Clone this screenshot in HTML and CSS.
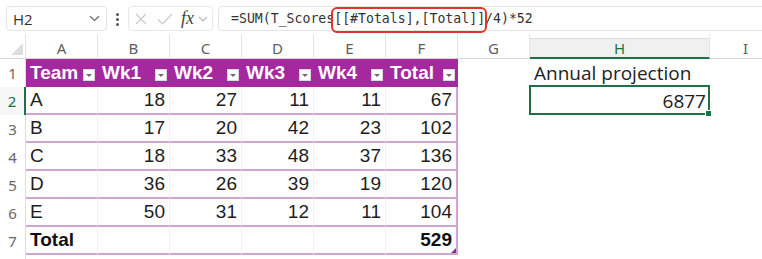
FILE: index.html
```html
<!DOCTYPE html>
<html>
<head>
<meta charset="utf-8">
<link rel="stylesheet" href="styles.css">
</head>
<body>
<div class="toolbar">
  <div class="namebox">
    <span>H2</span>
    <svg width="11" height="7" viewBox="0 0 11 7"><path d="M1 1.2l4.5 4.3L10 1.2" stroke="#6b6b6b" fill="none" stroke-width="1.2"/></svg>
  </div>
  <div class="kebab"><i></i><i></i><i></i></div>
  <div class="fbtns">
    <svg class="ic-x" width="12" height="12" viewBox="0 0 12 12"><path d="M1 1L11 11M11 1L1 11" stroke="#c9c9c9" stroke-width="1.1"/></svg>
    <svg class="ic-ok" width="16" height="12" viewBox="0 0 16 12"><path d="M1 6.5l4.5 4.5L15 1" stroke="#c9c9c9" fill="none" stroke-width="1.1"/></svg>
    <span class="fx">fx</span>
    <svg class="ic-dd" width="10" height="6" viewBox="0 0 10 6"><path d="M1 1l4 4l4-4" stroke="#b5b5b5" fill="none" stroke-width="1.1"/></svg>
  </div>
  <div class="formula"><span>=SUM(T_Scores</span><span class="hl">[[#Totals],[Total]]</span><span>/4)*52</span></div>
</div>

<div class="sheet">
  <div class="corner"><svg width="12" height="12" viewBox="0 0 12 12"><path d="M12 0V12H0Z" fill="#dedede"/></svg></div>
  <div class="ch">A</div><div class="ch">B</div><div class="ch">C</div><div class="ch">D</div><div class="ch">E</div><div class="ch">F</div><div class="ch">G</div><div class="ch sel">H</div><div class="ch">I</div>

  <div class="rh">1</div>
  <div class="th">Team<span class="flt"></span></div>
  <div class="th">Wk1<span class="flt"></span></div>
  <div class="th">Wk2<span class="flt"></span></div>
  <div class="th">Wk3<span class="flt"></span></div>
  <div class="th">Wk4<span class="flt"></span></div>
  <div class="th">Total<span class="flt"></span></div>
  <div class="c"></div>
  <div class="c label">Annual projection</div>
  <div class="c"></div>

  <div class="rh sel">2</div>
  <div class="td">A</div><div class="td num">18</div><div class="td num">27</div><div class="td num">11</div><div class="td num">11</div><div class="td num f">67</div>
  <div class="c"></div><div class="c val active">6877</div><div class="c"></div>

  <div class="rh">3</div>
  <div class="td">B</div><div class="td num">17</div><div class="td num">20</div><div class="td num">42</div><div class="td num">23</div><div class="td num f">102</div>
  <div class="c"></div><div class="c"></div><div class="c"></div>

  <div class="rh">4</div>
  <div class="td">C</div><div class="td num">18</div><div class="td num">33</div><div class="td num">48</div><div class="td num">37</div><div class="td num f">136</div>
  <div class="c"></div><div class="c"></div><div class="c"></div>

  <div class="rh">5</div>
  <div class="td">D</div><div class="td num">36</div><div class="td num">26</div><div class="td num">39</div><div class="td num">19</div><div class="td num f">120</div>
  <div class="c"></div><div class="c"></div><div class="c"></div>

  <div class="rh">6</div>
  <div class="td">E</div><div class="td num">50</div><div class="td num">31</div><div class="td num">12</div><div class="td num">11</div><div class="td num f">104</div>
  <div class="c"></div><div class="c"></div><div class="c"></div>

  <div class="rh">7</div>
  <div class="td tt">Total</div><div class="td"></div><div class="td"></div><div class="td"></div><div class="td"></div><div class="td num f tt end">529</div>
  <div class="c"></div><div class="c"></div><div class="c"></div>

  <div class="rh"></div>
  <div class="c"></div><div class="c"></div><div class="c"></div><div class="c"></div><div class="c"></div><div class="c"></div>
  <div class="c"></div><div class="c"></div><div class="c"></div>
</div>
</body>
</html>
```

FILE: styles.css
```css
* { box-sizing: border-box; }

body {
  margin: 0;
  width: 762px;
  height: 259px;
  overflow: hidden;
  background: #fff;
  font-family: "Liberation Sans", Arial, sans-serif;
}

/* ---------- formula bar ---------- */
.toolbar {
  height: 34px;
  display: flex;
  align-items: flex-start;
  padding: 6px 0 0 6px;
  white-space: nowrap;
  overflow: hidden;
}

.namebox {
  width: 101px;
  height: 25px;
  flex: none;
  border: 1px solid #e4e4e4;
  border-radius: 4px;
  display: flex;
  align-items: center;
  justify-content: space-between;
  padding: 0 6px;
  font-family: "Open Sans", sans-serif;
  font-size: 15px;
  color: #333;
}

.kebab {
  width: 21px;
  flex: none;
  display: flex;
  flex-direction: column;
  align-items: center;
  gap: 2px;
  padding-top: 7px;
}
.kebab i {
  display: block;
  width: 3px;
  height: 3px;
  border-radius: 50%;
  background: #555;
}

.fbtns {
  width: 85px;
  height: 25px;
  flex: none;
  border: 1px solid #e8e8e8;
  border-radius: 4px;
  display: flex;
  align-items: center;
  padding-left: 6px;
}
.ic-ok { margin-left: 10px; }
.fx {
  margin-left: 8px;
  font-family: "Liberation Serif", serif;
  font-style: italic;
  font-size: 18px;
  color: #444;
  line-height: 1;
  margin-top: -2px;
}
.ic-dd { margin-left: 4px; }

.formula {
  flex: 1;
  margin-left: 5px;
  margin-right: -20px;
  height: 25px;
  border: 1px solid #e4e4e4;
  border-radius: 4px;
  padding-left: 12px;
  font-family: "DejaVu Sans Mono", "Liberation Mono", monospace;
  font-size: 13.2px;
  line-height: 23px;
  color: #333;
}
.hl {
  position: relative;
  display: inline-block;
}
.hl::after {
  content: "";
  position: absolute;
  left: -3px;
  right: -2px;
  top: 0;
  bottom: -3px;
  border: 2px solid #e2332c;
  border-radius: 6px;
}

/* ---------- sheet grid ---------- */
.sheet {
  display: grid;
  grid-template-columns: 26px repeat(7, 72px) 180px 72px;
  grid-template-rows: 25px repeat(7, 28px) 4px;
  overflow: hidden;
}

.corner {
  border-bottom: 1px solid #d6d6d6;
  border-right: 1px solid #e2e2e2;
  display: flex;
  align-items: flex-end;
  justify-content: flex-end;
  padding: 0 2px 3px 0;
}

.ch {
  border-bottom: 1px solid #d6d6d6;
  border-right: 1px solid #e6e6e6;
  display: flex;
  align-items: center;
  justify-content: center;
  padding-top: 4px;
  font-family: "Noto Sans", sans-serif;
  font-size: 15px;
  color: #5e5e5e;
}
.ch.sel {
  background: linear-gradient(to bottom, #fff 0 4px, #dcdcdc 4px 5px, #f0f0f0 5px);
  border-bottom: 2px solid #1f7145;
  color: #1f7145;
}

.rh {
  border-right: 1px solid #dedede;
  display: flex;
  align-items: center;
  justify-content: center;
  font-family: "Noto Sans", sans-serif;
  font-size: 15px;
  color: #666;
}
.rh.sel {
  background: #f6f6f6;
  border-right: 2px solid #1f7145;
  color: #1f7145;
}

.th {
  background: #a5289e;
  color: #fff;
  font-weight: bold;
  font-size: 19px;
  line-height: 28px;
  padding-left: 4px;
  display: flex;
  white-space: nowrap;
}
.flt {
  margin-left: auto;
  margin-right: 3px;
  margin-top: 10px;
  width: 12px;
  height: 12px;
  flex: none;
  background: #fff;
  border: 1px solid #d9d9d9;
  display: flex;
  align-items: flex-end;
  justify-content: center;
  padding-bottom: 3px;
}
.flt::after {
  content: "";
  border-left: 3.5px solid transparent;
  border-right: 3.5px solid transparent;
  border-top: 3.5px solid #6a6a6a;
}

.td {
  border-bottom: 2px solid #d2a5cf;
  border-right: 1px solid #f0f0f0;
  font-size: 19px;
  line-height: 26px;
  color: #1e1e1e;
  padding: 0 4px;
  white-space: nowrap;
}
.num { text-align: right; }
.td.f { border-right: 2px solid #d2a5cf; padding-right: 4px; }
.tt { font-weight: bold; color: #111; }
.end { position: relative; }
.end::after {
  content: "";
  position: absolute;
  right: 0;
  bottom: 0;
  border-left: 5px solid transparent;
  border-bottom: 5px solid #8e2e8a;
}

.c {
  white-space: nowrap;
}
.label {
  font-family: "Open Sans", sans-serif;
  font-size: 19px;
  line-height: 28px;
  color: #222;
  padding-left: 4px;
}
.val {
  font-family: "Open Sans", sans-serif;
  font-size: 19px;
  line-height: 28px;
  color: #222;
  text-align: right;
  padding-right: 4px;
}
.active { position: relative; }
.active::after {
  content: "";
  position: absolute;
  left: -1px;
  top: -2px;
  right: 0;
  bottom: 0;
  border: 2px solid #1f7145;
}
.active::before {
  content: "";
  position: absolute;
  right: -2px;
  bottom: -2px;
  width: 5px;
  height: 5px;
  background: #1f7145;
  border: 1px solid #fff;
  z-index: 1;
}
```
